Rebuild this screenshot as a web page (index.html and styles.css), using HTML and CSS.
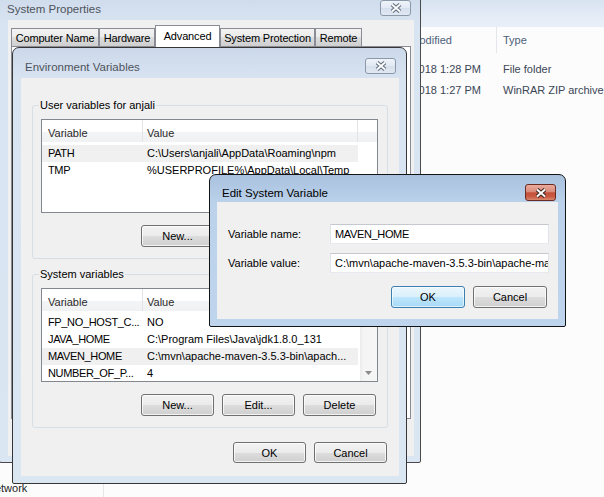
FILE: index.html
```html
<!DOCTYPE html>
<html>
<head>
<meta charset="utf-8">
<title>Environment Variables</title>
<link rel="stylesheet" href="styles.css">
</head>
<body>
<div class="desk">

  <div class="explorer">
    <div class="ex-toolbar"></div>
    <div class="ex-body">
      <div class="ex-nav"><div class="ex-nav-item">Network</div></div>
      <div class="ex-list">
        <div class="ex-row ex-head">
          <div class="c-name"></div>
          <div class="c-date">Date modified</div>
          <div class="c-type">Type</div>
        </div>
        <div class="ex-rows">
          <div class="ex-row">
            <div class="c-name"></div>
            <div class="c-date c-val">5/12/2018 1:28 PM</div>
            <div class="c-type">File folder</div>
          </div>
          <div class="ex-row">
            <div class="c-name"></div>
            <div class="c-date c-val">5/12/2018 1:27 PM</div>
            <div class="c-type">WinRAR ZIP archive</div>
          </div>
        </div>
      </div>
    </div>
  </div>

  <div class="win inactive sysprops">
    <div class="titlebar">
      <span class="title">System Properties</span>
      <span class="close">
        <svg width="14" height="10" viewBox="0 0 14 10"><path d="M3 1.5 L11 8.5 M11 1.5 L3 8.5" stroke="#5f6b7b" stroke-width="4"/><path d="M3 1.5 L11 8.5 M11 1.5 L3 8.5" stroke="#fbfcfe" stroke-width="2"/></svg>
      </span>
    </div>
    <div class="client">
      <div class="tabs">
        <div class="tab w-cn">Computer Name</div>
        <div class="tab w-hw">Hardware</div>
        <div class="tab sel w-ad">Advanced</div>
        <div class="tab w-sp">System Protection</div>
        <div class="tab w-re">Remote</div>
      </div>
      <div class="tabpanel"></div>
    </div>
  </div>

  <div class="win inactive env">
    <div class="titlebar">
      <span class="title">Environment Variables</span>
      <span class="close">
        <svg width="14" height="10" viewBox="0 0 14 10"><path d="M3 1.5 L11 8.5 M11 1.5 L3 8.5" stroke="#5f6b7b" stroke-width="4"/><path d="M3 1.5 L11 8.5 M11 1.5 L3 8.5" stroke="#fbfcfe" stroke-width="2"/></svg>
      </span>
    </div>
    <div class="client env-client">
      <fieldset class="group g-user">
        <legend>User variables for anjali</legend>
        <div class="lv">
          <div class="lv-head"><div>Variable</div><div>Value</div><div></div></div>
          <div class="lv-body">
            <div class="lv-rows">
              <div class="lv-row sel"><span>PATH</span><span>C:\Users\anjali\AppData\Roaming\npm</span></div>
              <div class="lv-row"><span>TMP</span><span>%USERPROFILE%\AppData\Local\Temp</span></div>
            </div>
          </div>
        </div>
        <div class="btnrow">
          <span class="btn">New...</span>
          <span class="btn">Edit...</span>
          <span class="btn">Delete</span>
        </div>
      </fieldset>
      <fieldset class="group g-sys">
        <legend>System variables</legend>
        <div class="lv">
          <div class="lv-head"><div>Variable</div><div>Value</div><div></div></div>
          <div class="lv-body">
            <div class="lv-rows">
              <div class="lv-row"><span>FP_NO_HOST_C...</span><span>NO</span></div>
              <div class="lv-row"><span>JAVA_HOME</span><span>C:\Program Files\Java\jdk1.8.0_131</span></div>
              <div class="lv-row sel"><span>MAVEN_HOME</span><span>C:\mvn\apache-maven-3.5.3-bin\apach...</span></div>
              <div class="lv-row"><span>NUMBER_OF_P...</span><span>4</span></div>
            </div>
            <div class="lv-scroll">
              <div class="lv-track"></div>
              <div class="lv-down"><svg width="7" height="4" viewBox="0 0 7 4"><path d="M0 0 H7 L3.5 4 Z" fill="#8a8a8a"/></svg></div>
            </div>
          </div>
        </div>
        <div class="btnrow">
          <span class="btn">New...</span>
          <span class="btn">Edit...</span>
          <span class="btn">Delete</span>
        </div>
      </fieldset>
      <div class="btnrow footer">
        <span class="btn btn-s">OK</span>
        <span class="btn btn-s">Cancel</span>
      </div>
    </div>
  </div>

  <div class="win active edit">
    <div class="titlebar">
      <span class="title">Edit System Variable</span>
      <span class="close red">
        <svg width="14" height="10" viewBox="0 0 14 10"><path d="M3 1.5 L11 8.5 M11 1.5 L3 8.5" stroke="#3b2420" stroke-width="4"/><path d="M3 1.5 L11 8.5 M11 1.5 L3 8.5" stroke="#ffffff" stroke-width="2"/></svg>
      </span>
    </div>
    <div class="client edit-client">
      <div class="form">
        <label class="flabel">Variable name:</label>
        <div class="field caps">MAVEN_HOME</div>
        <label class="flabel">Variable value:</label>
        <div class="field">C:\mvn\apache-maven-3.5.3-bin\apache-maven-3.5.3</div>
      </div>
      <div class="btnrow edit-btns">
        <span class="btn default">OK</span>
        <span class="btn">Cancel</span>
      </div>
    </div>
  </div>

</div>
</body>
</html>
```
FILE: styles.css
```css
* { box-sizing: border-box; }
html, body { margin: 0; padding: 0; }
body {
  width: 604px;
  height: 497px;
  overflow: hidden;
  font-family: "Liberation Sans", Arial, sans-serif;
  font-size: 11px;
  color: #000;
  background: #fcfcfc;
}
.desk { position: relative; width: 604px; height: 497px; overflow: hidden; }

/* ---------- explorer behind ---------- */
.explorer {
  position: absolute;
  inset: 0;
  display: flex;
  flex-direction: column;
  background: #fcfcfc;
}
.ex-toolbar { height: 27px; flex: none; background: linear-gradient(#d8e3f1, #e4ecf7 60%, #e8eff8); }
.ex-body { flex: 1; display: flex; }
.ex-nav {
  width: 104px;
  border-right: 1px solid #e6e6e6;
  display: flex;
  flex-direction: column;
  justify-content: flex-end;
  padding-bottom: 1px;
}
.ex-nav-item { margin-left: -13px; line-height: 16px; color: #1e1e1e; white-space: nowrap; }
.ex-list { flex: 1; }
.ex-row {
  display: grid;
  grid-template-columns: 274px 119px 1fr;
  height: 21px;
  align-items: center;
  white-space: nowrap;
  color: #3b4656;
}
.ex-head { height: 26px; color: #4c607a; }
.ex-head .c-date { height: 100%; display: flex; align-items: center; border-right: 1px solid #e3e6ea; }
.ex-rows { padding-top: 5px; }
.c-name { padding-left: 8px; overflow: hidden; }
.c-date { padding-left: 6px; overflow: hidden; }
.c-val { padding-left: 10px; }
.c-type { padding-left: 6px; overflow: hidden; }

/* ---------- windows ---------- */
.win {
  position: absolute;
  display: flex;
  flex-direction: column;
  border: 1px solid #3a3a3a;
  border-radius: 7px 7px 2px 2px;
}
.win.inactive { background: linear-gradient(#ccd9ea, #d9e4f2 34px, #dbe6f3); }
.win.active { background: linear-gradient(#a8c1de, #bcd2eb 28px, #bfd5ee); border-color: #141414; }

.titlebar { height: 30px; flex: none; display: flex; align-items: flex-start; justify-content: space-between; }
.title { font-size: 11.5px; line-height: 16px; margin-top: 11px; color: #4d535a; white-space: nowrap; }
.close {
  margin-top: 10px;
  width: 31px;
  height: 16px;
  border: 1px solid #8a98aa;
  border-radius: 3px;
  background: linear-gradient(#eff4fa, #e2e9f3 50%, #d6e0ec 50%, #e0e8f3);
  display: flex;
  align-items: center;
  justify-content: center;
}
.close.red {
  height: 17px;
  border-color: #6b2a22;
  background: linear-gradient(#e9ab9c, #da8c7b 45%, #c4503a 52%, #c95a43 78%, #db8a70);
}
.client { background: #f0f0f0; flex: 1; display: flex; flex-direction: column; }

/* ---------- system properties ---------- */
.sysprops { left: -1px; top: -11px; width: 422px; height: 474px; padding: 0 6px 6px 8px; border-color: #4a4a4a; }
.sysprops .title { margin-left: -1px; }
.sysprops .close { margin-right: 3px; }
.tabs { display: flex; align-items: flex-end; height: 21px; margin: 5px 0 0 3px; flex: none; }
.tab {
  height: 18px;
  border: 1px solid #898c95;
  border-bottom: none;
  background: linear-gradient(#f2f2f2, #ebebeb 50%, #dddddd 50%, #cfcfcf);
  display: flex;
  align-items: center;
  justify-content: center;
  white-space: nowrap;
  letter-spacing: -0.15px;
}
.tab.sel { height: 22px; margin-bottom: -1px; background: #fff; position: relative; z-index: 1; padding-bottom: 2px; }
.w-cn { width: 88px; }
.w-hw { width: 56px; }
.w-ad { width: 65px; }
.w-sp { width: 95px; }
.w-re { width: 47px; }
.tabpanel { flex: 1; margin: 0 3px 37px 3px; border: 1px solid #898c95; background: #fff; }

/* ---------- environment variables ---------- */
.env { left: 12px; top: 47px; width: 395px; height: 437px; padding: 0 7px 7px 8px; border-color: #363636; }
.env .title { margin-left: 4px; }
.env .close { margin-right: 3px; }

.group {
  margin: 0 11px;
  padding: 7px 9px 11px 8px;
  border: 1px solid #d5dfe5;
  border-radius: 3px;
  min-width: 0;
}
.g-user { margin-top: 20px; }
.g-sys { margin-top: 8px; }
.group legend { padding: 0 1px; margin-left: -2px; line-height: 14px; white-space: nowrap; }

.lv { border: 1px solid #828790; background: #fff; height: 94px; display: flex; flex-direction: column; overflow: hidden; }
.lv-head {
  height: 22px;
  flex: none;
  display: grid;
  grid-template-columns: 101px 215px 1fr;
  background: linear-gradient(#fff 0, #fff 55%, #f3f4f6 55%, #f0f1f3);
  color: #2a2a2a;
}
.lv-head div { padding: 6px 0 0 6px; line-height: 14px; border-right: 1px solid #e2e4e8; }
.lv-head div + div { padding-left: 4px; }
.lv-head div:last-child { border-right: none; }
.lv-body { flex: 1; display: flex; min-height: 0; }
.lv-rows { width: 316px; padding-top: 3px; flex: none; }
.lv-row { display: grid; grid-template-columns: 101px 215px; height: 17px; line-height: 17px; white-space: nowrap; }
.lv-row.sel { background: #f0f0f0; }
.lv-row span { padding-left: 6px; overflow: hidden; }
.lv-row span:first-child { letter-spacing: -0.35px; }
.lv-row span + span { padding-left: 4px; }
.lv-scroll { margin-left: auto; width: 17px; display: flex; flex-direction: column; background: linear-gradient(90deg, #ebebeb, #f4f4f4 3px, #f6f6f6); }
.lv-track { flex: 1; }
.lv-down { height: 17px; display: flex; align-items: center; justify-content: center; }

.btnrow { display: flex; justify-content: flex-end; gap: 8px; }
.group .btnrow { margin-top: 12px; margin-right: 2px; }
.footer { margin: 14px 12px 0 0; }
.btn {
  width: 73px;
  height: 22px;
  border: 1px solid #707070;
  border-radius: 3px;
  background: linear-gradient(#f2f2f2, #ebebeb 50%, #dddddd 50%, #cfcfcf);
  box-shadow: inset 0 0 0 1px rgba(255, 255, 255, 0.75);
  display: flex;
  align-items: center;
  justify-content: center;
  color: #000;
  white-space: nowrap;
}
.btn-s { height: 21px; }
.btn.default {
  border-color: #3c7fb1;
  background: linear-gradient(#eaf6fd, #d9f0fc 50%, #bee6fd 50%, #a7d9f5);
  box-shadow: inset 0 0 0 1px rgba(255, 255, 255, 0.6);
}

/* ---------- edit system variable ---------- */
.edit { left: 209px; top: 174px; width: 357px; height: 153px; padding: 0 7px 7px 7px; }
.edit .titlebar { height: 27px; }
.edit .title { margin: 10px 0 0 5px; color: #000; }
.edit .close { margin: 9px 2px 0 0; }
.edit-client { padding: 22px 9px 10px 11px; }
.form { display: grid; grid-template-columns: 102px 1fr; row-gap: 9px; align-items: center; }
.flabel { white-space: nowrap; justify-self: start; }
.field {
  height: 20px;
  border: 1px solid;
  border-color: #c5c8cf #e0e3e8 #e6e9ee #e0e3e8;
  background: #fff;
  padding: 0 4px;
  line-height: 18px;
  white-space: nowrap;
  overflow: hidden;
}
.field.caps { letter-spacing: -0.35px; }
.edit-btns { margin: 13px 2px 0 0; }
.edit-btns .btn { width: 74px; }
```
